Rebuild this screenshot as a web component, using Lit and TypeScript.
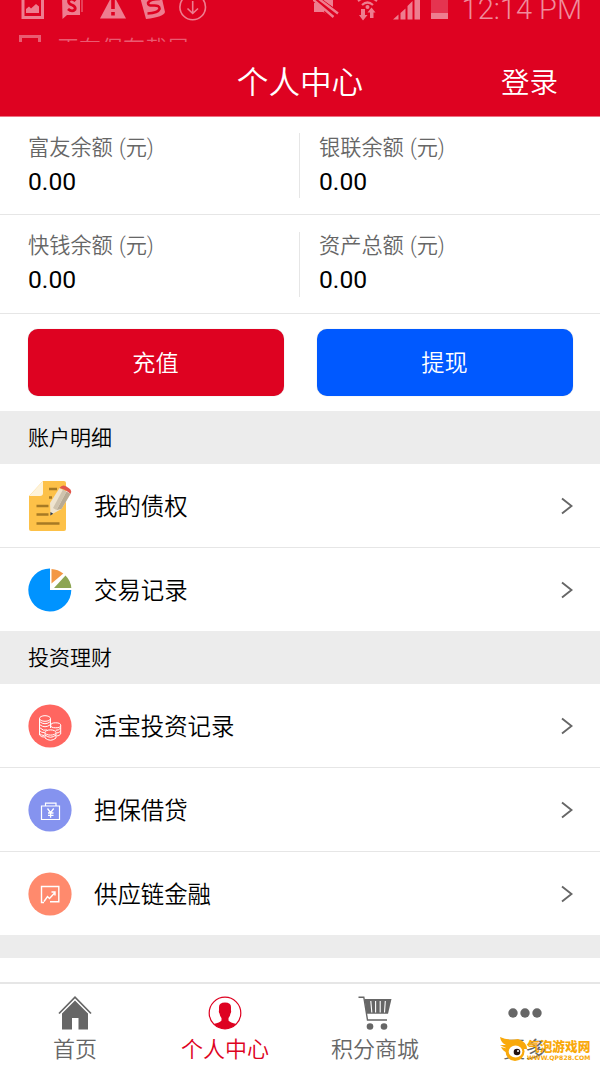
import { LitElement, html, css, svg } from "lit";
import { customElement, property } from "lit/decorators.js";

const glyphs: Record<string, unknown> = {
  note: svg`<svg width="44" height="52" viewBox="0 0 44 52">
    <path d="M15 1H36a2 2 0 0 1 2 2V49a2 2 0 0 1-2 2H3a2 2 0 0 1-2-2V16Z" fill="#fdc148"/>
    <path d="M15 1V13a3 3 0 0 1-3 3H1Z" fill="#fef3da"/>
    <path d="M21 9h8M21 17.500h3M8.500 26h12M8.500 34.500h12M8.500 43.500h23" stroke="#a67a24" stroke-width="2.400"/>
    <path d="M22.500 35 22 23 31.500 8 42.500 14 33.500 29Z" fill="#efe4cf"/>
    <path d="M28.500 30 38.500 11.500 42.500 14 33.500 29Z" fill="#b7aa94"/>
    <path d="M25 28 35 9.500 38.500 11.500 28.500 30Z" fill="#cfc3ae"/>
    <path d="M31.500 8Q34 4 38 6.200L41 8.200Q44.500 10.500 42.500 14Q38 9.500 31.500 8Z" fill="#e2574c"/>
    <path d="M22.300 35.500 22.500 32 25.200 33.800Z" fill="#333c4a"/>
  </svg>`,
  pie: svg`<svg width="44" height="44" viewBox="0 0 44 44">
    <path d="M22 .500A21.500 21.500 0 1 0 43.300 22H22Z" fill="#0093ff"/>
    <path d="M23.500 15.500V1Q30 1.300 35.300 5.500Z" fill="#f39845"/>
    <path d="M26 20 37.500 7.500Q43 13 43.300 20Z" fill="#8da552"/>
  </svg>`,
  coins: svg`<svg width="44" height="44" viewBox="0 0 44 44">
    <circle cx="22" cy="22" r="21.600" fill="#ff6660"/>
    <g fill="none" stroke="#fff" stroke-width="1">
      <ellipse cx="17" cy="14.500" rx="5.500" ry="2.800"/>
      <path d="M11.500 14.500V31M22.500 14.500V24M11.500 17.500q5.500 4.500 11 0M11.500 20.500q5.500 4.500 11 0M11.500 23.500q4 4 7.500 2.500M11.500 26.500q2 2.500 5 2M11.500 29.500q2 2 4.500 2M11.500 31q2 2.500 5 2"/>
      <ellipse cx="27.700" cy="21.300" rx="5" ry="2.500"/>
      <path d="M32.700 21.500V30q-1.500 2-4 2M32.700 24q-2 2.500-5 2.300M32.700 27q-1.700 2-4 2"/>
      <g fill="#ff6660"><path d="M17 28.500V34q5.500 4.500 11 0V28.500"/><ellipse cx="22.500" cy="28.500" rx="5.500" ry="2.600"/></g>
      <path d="M17 31q5.500 4.500 11 0"/>
    </g>
  </svg>`,
  bag: svg`<svg width="44" height="44" viewBox="0 0 44 44">
    <circle cx="22" cy="22" r="21.600" fill="#8593ef"/>
    <g fill="none" stroke="#fff"><path d="M13.500 18H31.500V31.500H13.500ZM17.500 18V15.200H28V18" stroke-width="1.200"/>
    <path d="M19.500 20.500 22.600 24.700 25.700 20.500M22.600 24.700V29.700M20 25H25.500M20 27.300H25.500" stroke-width="1.300"/></g>
  </svg>`,
  chart: svg`<svg width="44" height="44" viewBox="0 0 44 44">
    <circle cx="22" cy="22" r="21.600" fill="#ff8a6d"/>
    <g fill="none" stroke="#fff" stroke-width="1.400"><path d="M16 30.500H13.500V14.500H30.800V29.800H22"/>
    <path d="M16 29.500 19.500 24.500 21.500 26.500 27 20.500M23.500 20H27V23.500"/></g>
  </svg>`,
  home: svg`<svg width="34" height="34" viewBox="0 0 34 34">
    <path d="M1 17.500 17 1.200 33 17.500" fill="none" stroke="#666" stroke-width="1.700"/>
    <path d="M4 17.500 17 4.500 30 17.500V33.500H20.500V22H14V33.500H4Z" fill="#666"/>
  </svg>`,
  user: svg`<svg width="34" height="34" viewBox="0 0 34 34">
    <circle cx="17" cy="17" r="15.800" fill="none" stroke="#de0221" stroke-width="1.200"/>
    <path d="M11 11Q11 6.500 17 6.500Q23 6.500 23 11V14.500Q23.500 16 22.500 17.500Q22 20.500 20.500 22V24.500Q22 26.500 28.500 28A16 16 0 0 1 5.500 28Q12 26.500 13.500 24.500V22Q12 20.500 11.500 17.500Q10.500 16 11 14.500Z" fill="#de0221"/>
  </svg>`,
  cart: svg`<svg width="34" height="34" viewBox="0 0 34 34">
    <path d="M.500 1.200H5.800L9.500 24H29" fill="none" stroke="#666" stroke-width="1.400"/>
    <path d="M6.500 3H33.500L30 17.800H8.500Z" fill="#666"/>
    <path d="M12.800 5 13.800 16.500M17.600 5V16.500M22.200 5V16.500M27.300 5 26.500 16.500" stroke="#fff" stroke-width="1.100"/>
    <circle cx="12" cy="30.500" r="3.300" fill="#666"/><circle cx="26" cy="30.500" r="3.300" fill="#666"/>
  </svg>`,
  more: svg`<svg width="34" height="34" viewBox="0 0 34 34"><g fill="#666"><circle cx="5" cy="17" r="4.700"/><circle cx="17" cy="17" r="4.700"/><circle cx="29" cy="17" r="4.700"/></g></svg>`,
};

@customElement("status-bar")
class StatusBar extends LitElement {
  static styles = css`
    :host { display: block; height: 42px; overflow: hidden; color: #f08c9c; font-family: Roboto, "Noto Sans CJK SC", sans-serif; }
    .row { display: flex; justify-content: space-between; height: 35px; }
    svg { display: block; }
    .right { display: flex; }
    .clock { font-size: 29px; font-weight: 300; line-height: 34px; margin-top: -8px; margin-right: 18px; white-space: nowrap; }
    .notice { display: flex; color: #ea5b71; font-size: 22px; font-weight: 350; line-height: 28px; padding-left: 19px; gap: 15px; }
    .notice span { white-space: nowrap; }
  `;
  render() {
    return html`
      <div class="row">
        <svg width="220" height="24" viewBox="0 0 220 24" fill="#ee7d8f">
          <path d="M23-4V17.500H42.500V-4" fill="none" stroke="#ee7d8f" stroke-width="3"/>
          <path d="M26 13V9L29 6.500 31 8.500 36 4 39 6.500V13Z"/>
          <path d="M62-4H80V15H67L62.500 19Z"/><path d="M82-4V12" stroke="#ee7d8f" stroke-width="1"/>
          <path d="M75.500 1Q71.500-3 68.500 1Q68.500 4 72 5Q76 6.500 75 9.500Q72 12.500 68 9" fill="none" stroke="#de0221" stroke-width="2.800"/>
          <path d="M113-6 126 18.500H100Z"/><path d="M113 0V9M113 12V15.500" stroke="#de0221" stroke-width="3.600"/>
          <path d="M140-3 161-6 165 12Q164 17 146 19Z"/>
          <path d="M160-1Q150-1 148 3Q148 6 153 5.500Q160 5 159.500 9Q158 13 147.500 13.500" fill="none" stroke="#de0221" stroke-width="2.600"/>
          <circle cx="192.700" cy="7" r="12.800" fill="none" stroke="#ee7d8f" stroke-width="1.600"/>
          <path d="M192.700 1V13M187.500 8.500 192.700 13.500 198 8.500" fill="none" stroke="#ee7d8f" stroke-width="1.600"/>
        </svg>
        <div class="right">
          <svg width="149" height="24" viewBox="0 0 149 24" fill="#ee7d8f">
            <path d="M1 3H6L19 14V17L10 12H1ZM6-2H20V7Z"/>
            <path d="M2-3.500 25 14M-1-1.500 20.500 17.500" stroke="#de0221" stroke-width="4.500"/>
            <path d="M2-4 25 13.500M0-.500 20.500 17" stroke="#ee7d8f" stroke-width="2.400"/>
            <path d="M1 3H4L12 9.500 11 12H1Z"/>
            <path d="M45 1Q54.500-6 64 1M49 5Q54.500 0 60 5" fill="none" stroke="#ee7d8f" stroke-width="2.200"/>
            <circle cx="54.500" cy="7" r="2"/>
            <path d="M48 9H52V15H54.500L50 20.500 46 15H48ZM57 18V12.500H54.500L58.500 7.500 62.500 12.500H60.500V18Z"/>
            <path d="M80 19.500 85.500 14.500V19.500ZM87.500 13 92.500 8.500V19.500H87.500ZM94.500 6 99.500 1V19.500H94.500ZM101.500-2H107V19.500H101.500Z"/>
            <path d="M118-4H135V13H118Z" fill="#e53450"/><path d="M118 13H135V19H118Z"/>
          </svg>
          <span class="clock">12:14 PM</span>
        </div>
      </div>
      <div class="notice">
        <svg width="23" height="8" viewBox="0 0 23 8"><path d="M1.500 8V1.500H20.500V8" fill="none" stroke="#ea5b71" stroke-width="3"/></svg>
        <span>正在保存截屏</span>
      </div>`;
  }
}

@customElement("balance-cell")
class BalanceCell extends LitElement {
  @property() label = "";
  @property() value = "";
  static styles = css`
    :host { display: block; }
    .label { color: #666; font-size: 21.200px; font-weight: 350; line-height: 30px; padding-top: 2px; word-spacing: 1px; }
    .value { color: #000; font-size: 24.700px; line-height: 37px; padding-bottom: 1px; }
  `;
  render() {
    return html`<div class="label">${this.label}</div><div class="value">${this.value}</div>`;
  }
}

@customElement("menu-row")
class MenuRow extends LitElement {
  @property() icon = "";
  @property() label = "";
  static styles = css`
    :host { display: flex; align-items: center; height: 84px; padding: 0 27px 0 28px; box-sizing: border-box; border-bottom: 1px solid #e6e6e6; color: #000; }
    :host([last]) { border-bottom: 0; }
    .icon { display: flex; width: 66px; }
    .label { flex: 1; font-size: 23.400px; font-weight: 350; line-height: 34px; padding-top: 2px; }
    .arrow { display: block; }
  `;
  render() {
    return html`<span class="icon">${glyphs[this.icon]}</span><span class="label">${this.label}</span>
      <svg class="arrow" width="12" height="18" viewBox="0 0 12 18"><path d="M1 1.500 10.500 9 1 16.500" fill="none" stroke="#666" stroke-width="1.900"/></svg>`;
  }
}

@customElement("site-badge")
class SiteBadge extends LitElement {
  static styles = css`
    :host { display: flex; color: #f9a90b; }
    svg { display: block; }
    .words { display: flex; flex-direction: column; margin-left: -1px; }
    .name { font: 900 12.700px/17px "Noto Sans CJK SC", sans-serif; white-space: nowrap; }
    .url { font: 700 6.200px/7px "DejaVu Sans", sans-serif; white-space: nowrap; }
  `;
  render() {
    return html`
      <svg width="28" height="26" viewBox="0 0 28 26">
        <path d="M0 0Q8 4 18 2Q27 5 27 12H8L0 8H6Q1 6 0 0ZM1 10 9 12 9 16Q3 15 1 10Z" fill="#f9a90b"/>
        <circle cx="15" cy="14.500" r="9.500" fill="#f9a90b"/><ellipse cx="15.500" cy="14.500" rx="6.800" ry="6" fill="#fff"/>
        <circle cx="17" cy="15" r="3.300" fill="#211"/><circle cx="18" cy="14" r="1" fill="#fff"/>
      </svg>
      <div class="words"><span class="name">气泡游戏网</span><span class="url">WWW.QP828.COM</span></div>`;
  }
}

@customElement("app-root")
class AppRoot extends LitElement {
  static styles = css`
    :host { display: flex; flex-direction: column; position: relative; width: 600px; height: 1067px; overflow: hidden; background: #fff; font-family: Roboto, "Noto Sans CJK SC", sans-serif; }
    .top { background: #de0221; height: 116px; border-bottom: 1px solid #ee7284; box-sizing: content-box; color: #fff; }
    .bar { display: grid; grid-template-columns: 1fr auto 1fr; align-items: center; height: 83px; font-weight: 350; }
    .title { grid-column: 2; font-size: 31.600px; line-height: 46px; }
    .login { justify-self: end; padding-right: 42px; font-size: 28.500px; line-height: 42px; }
    .pair { display: grid; grid-template-columns: 271px 20px 1fr; align-items: center; height: 98px; box-sizing: border-box; border-bottom: 1px solid #e6e6e6; padding-left: 28px; }
    .pair + .pair { height: 99px; }
    .rule { width: 1px; height: 65px; background: #e6e6e6; }
    .actions { display: flex; gap: 33px; padding: 15px 27.500px; height: 97px; box-sizing: border-box; }
    .btn { flex: 1; height: 66.500px; border-radius: 10px; color: #fff; font-size: 23.200px; font-weight: 350; line-height: 69px; text-align: center; box-shadow: 0 0 1px rgba(0, 0, 0, 0.3); }
    .red { background: #de0221; }
    .blue { background: #0059ff; }
    .section { background: #ececec; height: 53px; box-sizing: border-box; padding-left: 28px; font-size: 21px; font-weight: 350; line-height: 55px; color: #000; }
    menu-row[last] { height: 83px; }
    .gap { background: #ececec; height: 23px; }
    .blank { flex: 1; }
    .tabs { display: grid; grid-template-columns: repeat(4, 1fr); height: 85px; box-sizing: border-box; border-top: 2px solid #e6e6e6; color: #666; }
    .tab { display: flex; flex-direction: column; align-items: center; padding-top: 12px; font-size: 22px; font-weight: 350; line-height: 34px; gap: 3px; }
    .tab svg { display: block; }
    .on { color: #de0221; }
    site-badge { position: absolute; left: 500px; bottom: 1px; height: 29px; }
  `;
  render() {
    const tabs = [["home", "首页"], ["user", "个人中心"], ["cart", "积分商城"], ["more", "更多"]];
    return html`
      <div class="top">
        <status-bar></status-bar>
        <div class="bar"><span class="title">个人中心</span><span class="login">登录</span></div>
      </div>
      <div class="pair">
        <balance-cell label="富友余额 (元)" value="0.00"></balance-cell><div class="rule"></div>
        <balance-cell label="银联余额 (元)" value="0.00"></balance-cell>
      </div>
      <div class="pair">
        <balance-cell label="快钱余额 (元)" value="0.00"></balance-cell><div class="rule"></div>
        <balance-cell label="资产总额 (元)" value="0.00"></balance-cell>
      </div>
      <div class="actions"><div class="btn red">充值</div><div class="btn blue">提现</div></div>
      <div class="section">账户明细</div>
      <menu-row icon="note" label="我的债权"></menu-row>
      <menu-row icon="pie" label="交易记录" last></menu-row>
      <div class="section">投资理财</div>
      <menu-row icon="coins" label="活宝投资记录"></menu-row>
      <menu-row icon="bag" label="担保借贷"></menu-row>
      <menu-row icon="chart" label="供应链金融" last></menu-row>
      <div class="gap"></div>
      <div class="blank"></div>
      <div class="tabs">
        ${tabs.map(([icon, label]) => html`<div class="tab ${icon === "user" ? "on" : ""}">${glyphs[icon]}<span>${label}</span></div>`)}
      </div>
      <site-badge></site-badge>`;
  }
}
